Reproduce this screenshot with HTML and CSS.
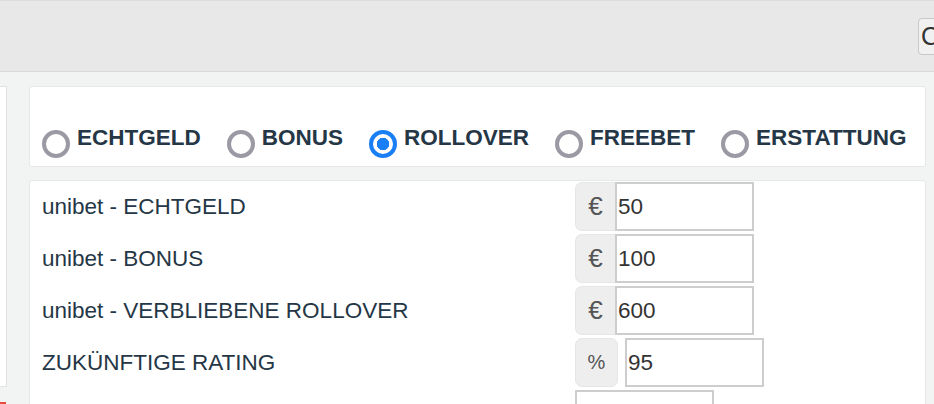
FILE: index.html
```html
<!DOCTYPE html>
<html lang="de">
<head>
    <meta charset="UTF-8">
    <meta name="viewport" content="width=device-width, initial-scale=1.0">
    <title>Rollover Rechner</title>
    <link rel="stylesheet" href="styles.css">
</head>
<body>
    <header class="topbar">
        <button class="top-button">Config</button>
    </header>

    <main class="layout">
        <aside class="sidebar">
            <div class="side-panel"></div>
            <div class="side-alert"></div>
        </aside>

        <section class="content">
            <!-- Kontotyp -->
            <div class="card type-card">
                <label class="radio"><span class="dot"></span>ECHTGELD</label>
                <label class="radio"><span class="dot"></span>BONUS</label>
                <label class="radio checked"><span class="dot"></span>ROLLOVER</label>
                <label class="radio"><span class="dot"></span>FREEBET</label>
                <label class="radio"><span class="dot"></span>ERSTATTUNG</label>
            </div>

            <!-- Werte -->
            <div class="card field-card">
                <div class="field-label">unibet - ECHTGELD</div>
                <div class="input-group">
                    <span class="addon">€</span>
                    <input class="field" type="text" value="50">
                </div>

                <div class="field-label">unibet - BONUS</div>
                <div class="input-group">
                    <span class="addon">€</span>
                    <input class="field" type="text" value="100">
                </div>

                <div class="field-label">unibet - VERBLIEBENE ROLLOVER</div>
                <div class="input-group">
                    <span class="addon">€</span>
                    <input class="field" type="text" value="600">
                </div>

                <div class="field-label">ZUKÜNFTIGE RATING</div>
                <div class="input-group split">
                    <span class="addon">%</span>
                    <input class="field" type="text" value="95">
                </div>

                <div class="field-label"></div>
                <div class="input-group">
                    <input class="field" type="text" value="">
                </div>
            </div>
        </section>
    </main>
</body>
</html>
```

FILE: styles.css
```css
html, body {
    margin: 0;
    height: 100%;
    overflow: hidden;
}
body {
    font-family: 'Liberation Sans', Arial, sans-serif;
    background: #f2f3f3;
    color: #253746;
}
.topbar {
    height: 70px;
    background: #e8e8e8;
    border-top: 1px solid #dcdcdc;
    border-bottom: 1px solid #d8d8d8;
    display: flex;
    align-items: center;
}
.top-button {
    margin-left: auto;
    margin-right: -66px;
    width: 82px;
    height: 37px;
    padding: 0 2px;
    text-align: left;
    background: #f1f1f1;
    border: 1px solid #c8c8c8;
    border-radius: 4px;
    font-family: 'Liberation Sans', Arial, sans-serif;
    font-size: 25px;
    color: #333;
}
.layout {
    display: flex;
    padding-top: 14px;
}
.sidebar {
    flex: 0 0 7px;
}
.side-panel {
    height: 299px;
    background: #fff;
    border: 1px solid #e2e2e2;
    border-left: none;
}
.side-alert {
    margin-top: 15px;
    height: 10px;
    width: 6px;
    background: #e74c3c;
}
.content {
    flex: 0 0 897px;
    margin-left: 22px;
}
.card {
    background: #fff;
    border: 1px solid #e6e8e8;
    border-radius: 3px;
}
.type-card {
    display: flex;
    align-items: flex-start;
    gap: 26px;
    padding: 30px 12px 0;
    box-sizing: border-box;
    height: 81px;
}
.radio {
    display: flex;
    align-items: center;
    gap: 7px;
    font-size: 22.5px;
    font-weight: bold;
    line-height: 26px;
    white-space: nowrap;
}
.dot {
    width: 28px;
    height: 28px;
    box-sizing: border-box;
    border: 4px solid #9b99a4;
    border-radius: 50%;
    margin-top: 13px;
    background: #fff;
}
.radio.checked .dot {
    border-color: #1a7ef5;
    background: radial-gradient(circle, #1a7ef5 0 6px, #fff 6.5px);
}
.field-card {
    margin-top: 13px;
    display: grid;
    grid-template-columns: 533px auto;
    row-gap: 3px;
    padding: 1px 12px 20px;
}
.field-label {
    display: flex;
    align-items: center;
    padding-top: 1px;
    font-size: 22.5px;
}
.input-group {
    display: flex;
    height: 49px;
}
.addon {
    width: 40px;
    box-sizing: border-box;
    display: flex;
    align-items: center;
    justify-content: center;
    background: #eee;
    border: 1px solid #e6e6e6;
    border-right: none;
    border-radius: 7px 0 0 7px;
    color: #555;
    font-size: 26px;
}
.field {
    width: 139px;
    height: 49px;
    box-sizing: border-box;
    border: 2px solid #cdcdcd;
    padding: 0 1px;
    font-family: 'Liberation Sans', Arial, sans-serif;
    font-size: 22.5px;
    color: #333;
    outline: none;
}
.split {
    gap: 7px;
}
.split .addon {
    width: 43px;
    border-right: 1px solid #e6e6e6;
    border-radius: 7px;
    font-size: 20px;
}
```
